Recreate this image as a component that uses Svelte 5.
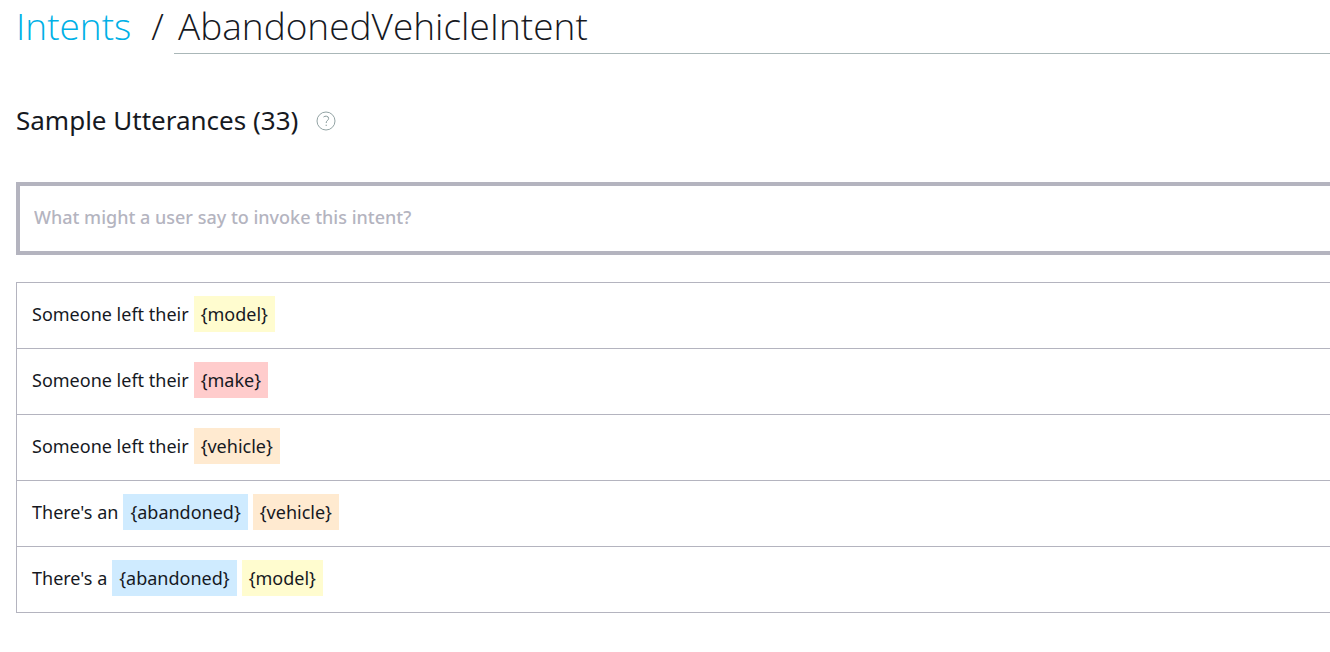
<script>
  const utterances = [
    ['Someone left their', 'model'],
    ['Someone left their', 'make'],
    ['Someone left their', 'vehicle'],
    ["There's an", 'abandoned', 'vehicle'],
    ["There's a", 'abandoned', 'model']
  ];
</script>

<main>
  <header>
    <a href="#intents">Intents</a>
    <span class="slash">/</span>
    <h1>AbandonedVehicleIntent</h1>
  </header>

  <div class="title">
    <h2>Sample Utterances (33)</h2>
    <button class="help" aria-label="Help">
      <svg viewBox="0 0 20 20" width="20" height="20" fill="none" stroke="#87999a">
        <circle cx="10" cy="10" r="9" stroke-width=".9" />
        <path d="M7.5 6Q8.8 5 10.4 5.2Q12.8 5.5 12.6 7.6Q12.5 8.8 11.3 9.6Q10.2 10.4 10.2 12M10.2 13.7v1.3" />
      </svg>
    </button>
  </div>

  <input aria-label="Sample utterance" placeholder="What might a user say to invoke this intent?" />

  <ul>
    {#each utterances as [text, ...slots]}
      <li>
        <span>{text}</span>
        {#each slots as slot}
          <span class="slot {slot}">{'{' + slot + '}'}</span>
        {/each}
      </li>
    {/each}
  </ul>
</main>

<style>
  :global(body) {
    background: #fff;
    overflow-x: hidden;
  }
  main {
    padding-left: 16px;
    color: #16191f;
    font-family: "Open Sans", "Noto Sans", sans-serif;
  }
  header {
    display: flex;
    font-size: 37px;
    line-height: 51px;
    font-weight: 300;
  }
  a {
    color: #00b0e6;
    text-decoration: none;
  }
  .slash {
    margin-left: 20px;
  }
  h1 {
    flex: 1;
    margin: 0 0 0 10px;
    padding: 0 0 2px 4px;
    border-bottom: 1px solid #aab7b8;
    font: inherit;
  }
  .title {
    display: flex;
    align-items: center;
    gap: 18px;
    margin-top: 47px;
  }
  h2 {
    margin: 0;
    padding-bottom: 2px;
    font: 400 26px/38px "Noto Sans", sans-serif;
  }
  .help {
    display: flex;
    padding: 0;
    border: 0;
    background: none;
  }
  input {
    display: block;
    box-sizing: border-box;
    width: 100%;
    height: 73px;
    margin-top: 41px;
    padding: 0 14px 4px;
    border: 4px solid #b4b4bf;
    border-right: 0;
    font: 500 18px "Noto Sans", sans-serif;
  }
  input::placeholder {
    color: #b4b4bf;
    opacity: 1;
  }
  ul {
    margin: 27px 0 0;
    padding: 0;
    list-style: none;
    border: 1px solid #b4b4bf;
    border-right: 0;
  }
  li {
    display: flex;
    align-items: center;
    gap: 5px;
    padding: 13px 0 16px 15px;
    font: 400 18px/36px "Noto Sans", sans-serif;
  }
  li + li {
    border-top: 1px solid #b4b4bf;
  }
  .slot {
    padding: 0 7px;
  }
  .model { background: #fffccf; }
  .make { background: #ffcccc; }
  .vehicle { background: #ffead0; }
  .abandoned { background: #cfebff; }
</style>
